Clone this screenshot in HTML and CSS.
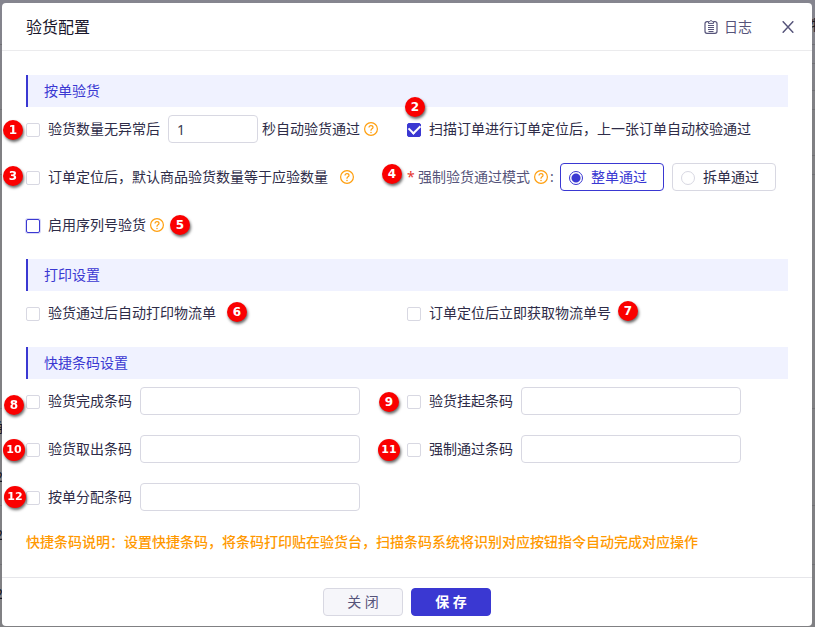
FILE: index.html
```html
<!DOCTYPE html>
<html lang="zh-CN">
<head>
<meta charset="utf-8">
<meta name="viewport" content="width=device-width, initial-scale=1">
<title>验货配置</title>
<link rel="stylesheet" href="styles.css">
</head>
<body>
<svg class="sprite" aria-hidden="true">
  <symbol id="help" viewBox="0 0 14 14">
    <circle cx="7" cy="7" r="6.4" fill="none" stroke="currentColor" stroke-width="1.2"/>
    <path d="M5 5.600C5 4.300 5.900 3.600 7 3.600s2 .7 2 1.800c0 1.400-2 1.500-2 2.900v.4" fill="none" stroke="currentColor" stroke-width="1.200"/>
    <circle cx="7" cy="10.4" r=".75" fill="currentColor"/>
  </symbol>
</svg>
<div class="backdrop" aria-hidden="true">
  <span class="peek peek-head">物</span>
  <span class="peek peek-a">确</span>
  <span class="peek peek-b">2</span>
  <span class="peek peek-c">2</span>
  <span class="peek peek-d">2</span>
</div>
<form class="modal" role="dialog" aria-labelledby="title">
  <header class="modal-head">
    <h1 id="title">验货配置</h1>
    <a class="log" href="#log">
      <svg width="14" height="14" viewBox="0 0 14 14" fill="none" stroke="currentColor" aria-hidden="true">
        <path d="M4.400 1.700H3A2 2 0 0 0 1 3.700v7.600a2 2 0 0 0 2 2h8a2 2 0 0 0 2-2V3.700a2 2 0 0 0-2-2H9.600" stroke-width="1.200"/>
        <path d="M4.500 3.400V1.600h1.200C5.900.9 6.300.6 7 .6s1.100.3 1.300 1h1.200v1.800z"/>
        <path d="M4 5.500h6M4 7.500h6M4 9.500h6M4.500 11.500h5"/>
      </svg>
      日志
    </a>
    <button class="close" type="button" aria-label="关闭窗口">
      <svg width="12" height="12" viewBox="0 0 12 12" stroke="currentColor" stroke-width="1.5" aria-hidden="true"><path d="M.7.3l10.600 11.400M11.300.3L.7 11.700"/></svg>
    </button>
  </header>

  <main class="modal-body">
    <section>
      <h2>按单验货</h2>
      <div class="grid">
        <div class="item">
          <i class="badge b1">1</i>
          <input type="checkbox" id="auto">
          <label for="auto">验货数量无异常后</label>
          <input class="text short" type="text" value="1" aria-label="秒数">
          <span class="tail">秒自动验货通过<svg class="help"><use href="#help"/></svg></span>
        </div>
        <div class="item">
          <i class="badge b2">2</i>
          <input type="checkbox" id="scan" checked>
          <label for="scan">扫描订单进行订单定位后，上一张订单自动校验通过</label>
        </div>
        <div class="item">
          <i class="badge b3">3</i>
          <input type="checkbox" id="qty">
          <label for="qty">订单定位后，默认商品验货数量等于应验数量</label>
          <svg class="help spaced"><use href="#help"/></svg>
        </div>
        <div class="item" role="radiogroup" aria-labelledby="mode">
          <i class="badge b4">4</i>
          <span class="mode" id="mode"><span class="star">*</span>强制验货通过模式<svg class="help"><use href="#help"/></svg><span class="colon">:</span></span>
          <label class="radio"><input type="radio" name="mode" checked>整单通过</label>
          <label class="radio"><input type="radio" name="mode">拆单通过</label>
        </div>
        <div class="item">
          <i class="badge b5">5</i>
          <input class="focused" type="checkbox" id="serial">
          <label class="with-help" for="serial">启用序列号验货<svg class="help"><use href="#help"/></svg></label>
        </div>
      </div>
    </section>

    <section>
      <h2>打印设置</h2>
      <div class="grid">
        <div class="item">
          <i class="badge b6">6</i>
          <input type="checkbox" id="print">
          <label for="print">验货通过后自动打印物流单</label>
        </div>
        <div class="item">
          <i class="badge b7">7</i>
          <input type="checkbox" id="fetch">
          <label for="fetch">订单定位后立即获取物流单号</label>
        </div>
      </div>
    </section>

    <section>
      <h2>快捷条码设置</h2>
      <div class="grid">
        <div class="item">
          <i class="badge b8">8</i>
          <input type="checkbox" id="done"><label for="done">验货完成条码</label>
          <input class="text" type="text" aria-label="验货完成条码">
        </div>
        <div class="item">
          <i class="badge b9">9</i>
          <input type="checkbox" id="hold"><label for="hold">验货挂起条码</label>
          <input class="text" type="text" aria-label="验货挂起条码">
        </div>
        <div class="item">
          <i class="badge b10">10</i>
          <input type="checkbox" id="take"><label for="take">验货取出条码</label>
          <input class="text" type="text" aria-label="验货取出条码">
        </div>
        <div class="item">
          <i class="badge b11">11</i>
          <input type="checkbox" id="force"><label for="force">强制通过条码</label>
          <input class="text" type="text" aria-label="强制通过条码">
        </div>
        <div class="item">
          <i class="badge b12">12</i>
          <input type="checkbox" id="assign"><label for="assign">按单分配条码</label>
          <input class="text" type="text" aria-label="按单分配条码">
        </div>
      </div>
    </section>
    <p class="note">快捷条码说明：设置快捷条码，将条码打印贴在验货台，扫描条码系统将识别对应按钮指令自动完成对应操作</p>
  </main>

  <footer class="modal-foot">
    <button class="btn" type="button">关 闭</button>
    <button class="btn primary" type="submit">保 存</button>
  </footer>
</form>
</body>
</html>
```
FILE: styles.css
```css
* { box-sizing: border-box; }

body {
  margin: 0;
  padding: 3px 3px 1px 2px;
  background: #808083;
  color: #2e2c48;
  font: 14px/22px "Noto Sans", "Noto Sans CJK SC", sans-serif;
}

.sprite { position: absolute; width: 0; height: 0; }

/* Dimmed page behind the dialog, with its table rules */
.backdrop {
  --rule: linear-gradient(#717175, #717175);
  position: fixed;
  inset: 0;
  overflow: hidden;
  background:
    var(--rule) 0 44px / 100% 1px,
    var(--rule) 0 109px / 100% 1px,
    var(--rule) 0 174px / 100% 1px,
    var(--rule) 0 408px / 100% 1px,
    var(--rule) 0 505px / 100% 1px,
    var(--rule) 0 564px / 100% 1px,
    var(--rule) 100% 63px / 3px 1px,
    var(--rule) 100% 90px / 3px 1px,
    var(--rule) 100% 155px / 3px 1px,
    linear-gradient(#85858f, #808083 120px);
  background-repeat: no-repeat;
  color: #17171f;
}
.peek { position: absolute; line-height: 20px; }
.peek-head { right: -10px; top: 15px; }
.peek-a { left: -11px; top: 417px; }
.peek-b { left: -5px; top: 467px; }
.peek-c { left: -5px; top: 525px; }
.peek-d { left: -5px; top: 584px; }

.modal {
  position: relative;
  background: #fff;
  border-radius: 4px;
}

.modal-head {
  display: flex;
  align-items: center;
  height: 48px;
  padding: 0 18px 0 24px;
  border-bottom: 1px solid #ebebed;
}
h1 {
  margin: 0 auto 0 0;
  color: #17152b;
  font-size: 16px;
  font-weight: 400;
}
.log {
  display: flex;
  align-items: center;
  gap: 6px;
  margin-right: 30px;
  color: #56547a;
  text-decoration: none;
}
.close {
  display: flex;
  padding: 0;
  border: 0;
  background: none;
  color: #56547a;
}

.modal-body { padding: 24px; }

h2 {
  margin: 0 0 8px;
  padding: 5px 16px;
  border-left: 2px solid #3a38d2;
  background: #f0f2ff;
  color: #3a38d2;
  font-size: 14px;
  font-weight: 400;
}

.grid {
  display: grid;
  grid-template-columns: 1fr 1fr;
  row-gap: 20px;
  margin-bottom: 20px;
}
.item {
  position: relative;
  display: flex;
  align-items: center;
  gap: 8px;
  height: 28px;
  white-space: nowrap;
}

input { flex: none; margin: 0; }

input[type="checkbox"] {
  appearance: none;
  display: grid;
  place-items: center;
  width: 14px;
  height: 14px;
  margin-top: 2px;
  border: 1px solid #d8d8e2;
  border-radius: 2px;
  background: #fff;
}
input[type="checkbox"]:checked { border-color: #3a38d2; background: #3a38d2; }
input[type="checkbox"]:checked::after {
  content: "";
  width: 9px;
  height: 6px;
  margin-bottom: 4px;
  border: solid #fff;
  border-width: 0 0 2px 2px;
  transform: rotate(-45deg);
}
input.focused {
  border-color: #3a38d2;
  box-shadow: 0 0 0 1px #d8d8f6;
}

.text {
  width: 220px;
  height: 28px;
  padding: 0 8px;
  border: 1px solid #d8d8e2;
  border-radius: 4px;
  background: #fff;
  color: #3c3a50;
  font: inherit;
}
.short { width: 90px; }

.help { flex: none; width: 14px; height: 14px; color: #ff9f0f; }
.spaced { margin-left: 4px; }
.tail, .with-help, .mode { display: flex; align-items: center; gap: 4px; }
.tail { margin-left: -4px; }
.mode { color: #56547a; }
.star { width: 7px; color: #e5352b; }
.colon { width: 2px; margin-left: -2px; }

.radio {
  display: flex;
  align-items: center;
  gap: 8px;
  width: 104px;
  height: 28px;
  padding: 0 8px;
  border: 1px solid #d8d8e2;
  border-radius: 4px;
}
.radio:has(:checked) { border-color: #3a38d2; color: #3a38d2; }
.radio input {
  appearance: none;
  width: 14px;
  height: 14px;
  margin-top: 2px;
  border: 1px solid #d8d8e2;
  border-radius: 50%;
}
.radio input:checked {
  border-color: #3a38d2;
  background: radial-gradient(circle, #3a38d2 4px, #fff 5px);
}

/* Numbered callouts laid over the form */
.badge {
  position: absolute;
  z-index: 1;
  width: 20px;
  height: 20px;
  border-radius: 50%;
  background: #fa0000;
  box-shadow: 1px 2px 3px rgba(0, 0, 0, .6);
  color: #fff;
  font: bold 12px/20px "DejaVu Sans", sans-serif;
  text-align: center;
}
.b1 { left: -23px; top: 5px; }
.b2 { left: -2px; top: -18px; }
.b3 { left: -23px; top: 3px; }
.b4 { left: -25px; top: 1px; }
.b5 { left: 144px; top: 4px; }
.b6 { left: 201px; top: 3px; }
.b7 { left: 211px; top: 2px; }
.b8 { left: -22px; top: 8px; }
.b9 { left: -28px; top: 5px; }
.b10, .b11, .b12 { width: 22px; height: 22px; font-size: 11px; line-height: 22px; }
.b10 { left: -23px; top: 4px; }
.b11 { left: -29px; top: 4px; }
.b12 { left: -22px; top: 3px; }

.note { margin: 0; color: #ff9900; font-weight: 500; }

.modal-foot {
  display: flex;
  justify-content: center;
  gap: 8px;
  padding: 10px;
  border-top: 1px solid #e6e6ea;
}
.btn {
  width: 80px;
  height: 28px;
  padding: 0;
  border: 1px solid #d8d8e2;
  border-radius: 4px;
  background: #f6f6fa;
  color: #56547a;
  font: inherit;
}
.primary {
  border-color: #3a38d2;
  background: #3a38d2;
  color: #fff;
  font-weight: 700;
}
```
